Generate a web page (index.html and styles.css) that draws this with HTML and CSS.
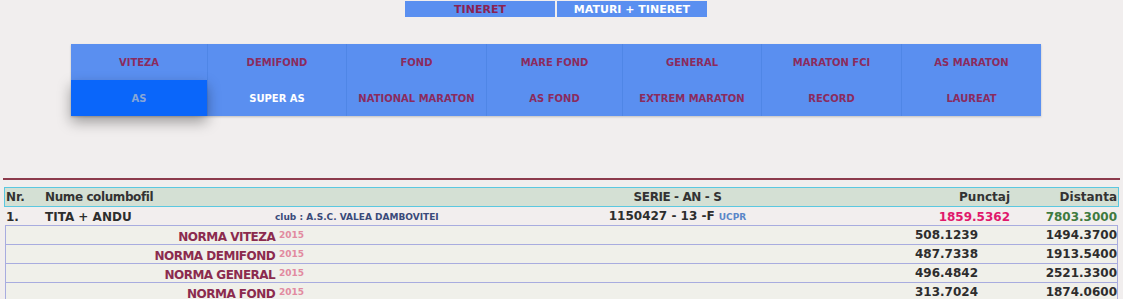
FILE: index.html
```html
<!DOCTYPE html>
<html>
<head>
<meta charset="utf-8">
<link rel="stylesheet" href="styles.css">
</head>
<body>
<div class="page">
  <div class="tabs">
    <a class="tab tab-active">TINERET</a>
    <a class="tab">MATURI + TINERET</a>
  </div>
  <div class="menu">
    <a class="cell">VITEZA</a>
    <a class="cell">DEMIFOND</a>
    <a class="cell">FOND</a>
    <a class="cell">MARE FOND</a>
    <a class="cell">GENERAL</a>
    <a class="cell">MARATON FCI</a>
    <a class="cell">AS MARATON</a>
    <a class="cell cell-active">AS</a>
    <a class="cell cell-white">SUPER AS</a>
    <a class="cell">NATIONAL MARATON</a>
    <a class="cell">AS FOND</a>
    <a class="cell">EXTREM MARATON</a>
    <a class="cell">RECORD</a>
    <a class="cell">LAUREAT</a>
  </div>
  <div class="rule"></div>
  <div class="results">
    <div class="row head">
      <span class="c-nr">Nr.</span>
      <span class="c-name tight">Nume columbofil</span>
      <span class="c-club"></span>
      <span class="c-serie tight">SERIE - AN - S</span>
      <span class="c-pct">Punctaj</span>
      <span class="c-dist">Distanta</span>
    </div>
    <div class="row main">
      <span class="c-nr">1.</span>
      <span class="c-name">TITA + ANDU</span>
      <span class="c-club">club : A.S.C. VALEA DAMBOVITEI</span>
      <span class="c-serie">1150427 - 13 -F <small class="fed">UCPR</small></span>
      <span class="c-pct pink">1859.5362</span>
      <span class="c-dist green">7803.3000</span>
    </div>
    <div class="norm">
      <span class="n-label">NORMA VITEZA <sup>2015</sup></span>
      <span></span>
      <span class="n-pct">508.1239</span>
      <span class="n-dist">1494.3700</span>
    </div>
    <div class="norm">
      <span class="n-label">NORMA DEMIFOND <sup>2015</sup></span>
      <span></span>
      <span class="n-pct">487.7338</span>
      <span class="n-dist">1913.5400</span>
    </div>
    <div class="norm">
      <span class="n-label">NORMA GENERAL <sup>2015</sup></span>
      <span></span>
      <span class="n-pct">496.4842</span>
      <span class="n-dist">2521.3300</span>
    </div>
    <div class="norm">
      <span class="n-label">NORMA FOND <sup>2015</sup></span>
      <span></span>
      <span class="n-pct">313.7024</span>
      <span class="n-dist">1874.0600</span>
    </div>
  </div>
</div>
</body>
</html>
```
FILE: styles.css
```css
html, body {
  margin: 0;
  padding: 0;
  background: #f1eeee;
  font-family: "DejaVu Sans", Verdana, sans-serif;
  font-weight: bold;
}
.page {
  width: 1123px;
  overflow: hidden;
}
.tabs {
  display: flex;
  gap: 2px;
  padding: 1px 0 0 405px;
}
.tab {
  display: block;
  width: 150px;
  height: 16px;
  line-height: 17px;
  background: #5a8ff0;
  color: #fff;
  text-align: center;
  font-size: 11px;
}
.tab-active { color: #8b2252; }
.menu {
  margin: 27px 0 0 71px;
  width: 970px;
  display: grid;
  grid-template-columns: 136px 139px 140px 136px 139px 140px 140px;
  grid-auto-rows: 36px;
  background: #5a8ff0;
  box-shadow: 0 1px 2px rgba(0,0,0,0.2);
}
.cell {
  display: flex;
  align-items: center;
  justify-content: center;
  border-left: 1px solid #4f86e6;
  color: #8b2b5e;
  font-size: 10px;
}
.cell:nth-child(7n+1) { border-left: none; }
.cell-active {
  background: #0a66fa;
  color: #88a6d6;
  box-shadow: 0 6px 14px rgba(0,0,0,0.35);
  position: relative;
}
.cell-white { color: #fff; }
.rule {
  margin: 62px 3px 0 3px;
  height: 2px;
  background: #8c3a4c;
}
.results {
  margin: 7px 4px 0 4px;
  font-size: 12px;
  color: #2d2d2d;
}
.row {
  display: grid;
  grid-template-columns: 40px 228px 327px 155px 255px 108px;
  height: 18px;
  line-height: 18px;
  align-items: center;
}
.row > span { white-space: nowrap; }
.tight { letter-spacing: -0.4px; }
.head {
  background: #d4e0d4;
  border: 1px solid #5bc8e0;
  color: #333;
}
.main {
  background: #f2eeee;
  padding: 0 1px;
}
.c-nr { padding-left: 1px; }
.c-club {
  font-size: 9px;
  color: #3a4a7a;
  padding-left: 2px;
}
.c-serie { text-align: center; }
.fed { font-size: 9px; color: #5a86c8; }
.c-pct, .c-dist { text-align: right; }
.c-dist { padding-right: 1px; }
.pink { color: #e0186c; }
.green { color: #3f7a40; }
.norm {
  display: grid;
  grid-template-columns: 298px 1fr 140px 139px;
  height: 18px;
  line-height: 18px;
  border: 1px solid #a8acdf;
  border-top: none;
  background: #f0f0ea;
  margin-left: 1px;
  margin-right: 1px;
}
.results .main + .norm { border-top: 1px solid #a8acdf; }
.n-label {
  text-align: right;
  color: #8b2b4e;
  letter-spacing: -0.5px;
}
.n-label sup {
  font-size: 9px;
  color: #e28aa0;
  vertical-align: 3px;
  letter-spacing: 0;
}
.n-pct, .n-dist { text-align: right; }
```
